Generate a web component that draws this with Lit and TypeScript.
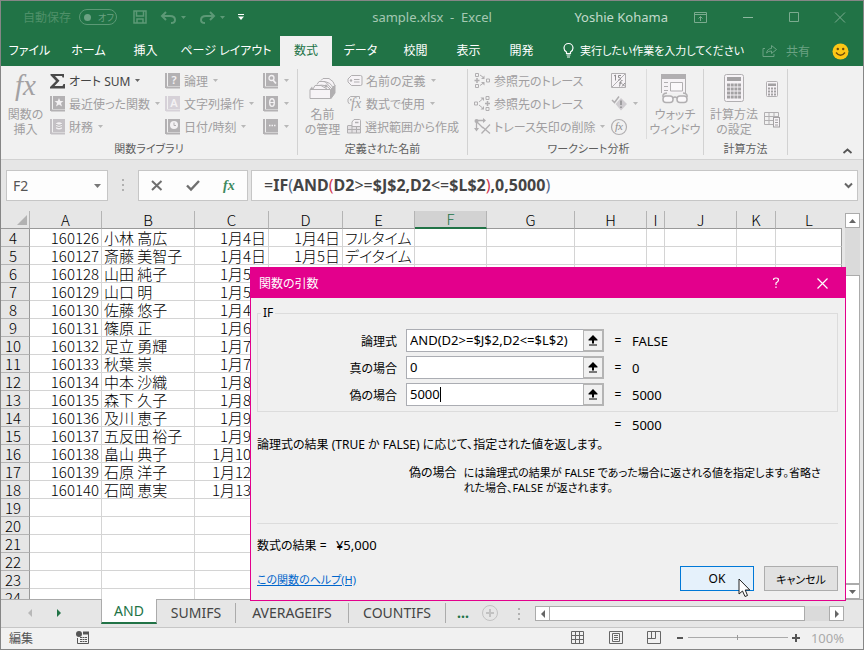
import { LitElement, html, css, svg, nothing, TemplateResult } from "lit";
import { customElement } from "lit/decorators.js";
import { classMap } from "lit/directives/class-map.js";

const icon = (w: number, h: number, body: TemplateResult) =>
  html`<svg width=${w} height=${h} viewBox="0 0 ${w} ${h}" aria-hidden="true">${body}</svg>`;

const book = (mark: TemplateResult, tone = "#b3b1b3") =>
  icon(16, 16, svg`<path d="M1 0V15M1 14.5H15" stroke=${tone} fill="none" stroke-width="2"/>
    <rect x="3" y="0" width="12" height="13" fill=${tone}/>${mark}`);

const letter = (t: string) =>
  svg`<text x="9" y="11" text-anchor="middle" font-family="Noto Sans" font-size="11" font-weight="600" fill="#f3f1f3">${t}</text>`;

const fxMark = (x: number, y: number, size: number, fill: string) =>
  svg`<text x=${x} y=${y} font-family="Liberation Serif" font-style="italic" font-size=${size} fill=${fill}>fx</text>`;

const G = "#b1afb1";

const icons = {
  save: icon(14, 14, svg`<path d="M1 1H13V13H1ZM3.500 1V6H10.500V1M4 13V9H10V13" fill="none" stroke="#5c9976" stroke-width="1.500"/>`),
  undo: icon(15, 13, svg`<path d="M5 1L1 5L5 9M1 5H9Q14 5 14 9Q14 12 10 12" fill="none" stroke="#5c9976" stroke-width="2"/>`),
  redo: icon(15, 13, svg`<path d="M10 1L14 5L10 9M14 5H6Q1 5 1 9Q1 12 5 12" fill="none" stroke="#5c9976" stroke-width="2"/>`),
  customize: icon(6, 6, svg`<path d="M0 .5H6" stroke="#fff"/><path d="M0 2.500H6L3 6Z" fill="#fff"/>`),
  ribbonOpt: icon(13, 11, svg`<path d="M.5 .5H12.500V10.500H.5ZM.5 2.500H12.500M6.500 9V4.500M4.500 6.500L6.500 4.500L8.500 6.500" fill="none" stroke="#7bab8f"/>`),
  min: icon(10, 11, svg`<path d="M0 5.500H10" stroke="#8db79f"/>`),
  max: icon(10, 11, svg`<path d="M.5 .5H9.500V9.500H.5Z" fill="none" stroke="#7bab8f"/>`),
  close: icon(10, 11, svg`<path d="M0 .5L10 10.500M10 .5L0 10.500" stroke="#7bab8f"/>`),
  bulb: icon(11, 15, svg`<path d="M3.500 10.500V9Q1 7.500 1 5A4.500 4.500 0 0 1 10 5Q10 7.500 7.500 9V10.500ZM3.500 12H7.500M4 14H7" fill="none" stroke="#fff" stroke-width="1.200"/>`),
  share: icon(16, 14, svg`<path d="M3 4.500H1V12.500H12V10M4.500 9Q5.500 4.500 9.500 4.500V1.500L14.500 5.500L9.500 9.500V7Q6.500 6.800 4.500 9Z" fill="none" stroke="#6ba283"/>`),
  smile: icon(17, 17, svg`<circle cx="8.500" cy="8.500" r="8" fill="#fdc716"/><circle cx="5.800" cy="6" r="1.200" fill="#6d4a0c"/><circle cx="11.200" cy="6" r="1.200" fill="#6d4a0c"/><path d="M4 9.500Q8.500 15 13 9.500" fill="none" stroke="#6d4a0c" stroke-width="1.300"/>`),
  bigFx: icon(24, 28, fxMark(1, 21, 29, "#a3a1a3")),
  sigma: icon(16, 16, svg`<path d="M.5 1H14V4.500H12.500L12 3H5L9.500 7.700L4.500 13H12.500L13.500 11H15V15.500H0V14L6 8L.5 2.300Z" fill="#4a4a4a"/>`),
  star: book(svg`<path d="M9 2L10.300 5H13.500L11 7L12 10.500L9 8.500L6 10.500L7 7L4.500 5H7.700Z" fill="#f3f1f3"/>`),
  coins: book(svg`<path d="M6 4.500Q9 2 12 4.500V9.500Q9 11.500 6 9.500Z" fill="#f3f1f3"/><path d="M6 5.500Q9 7 12 5.500M6 7.700Q9 9.200 12 7.700" stroke=${G} fill="none"/>`, "#c4c1c5"),
  quest: book(letter("?")),
  alpha: book(letter("A"), "#d6d1d8"),
  clock: book(svg`<circle cx="9" cy="6" r="4" fill="#f3f1f3"/><path d="M9 3.500V6.500H11" stroke=${G} fill="none"/>`),
  look: book(svg`<circle cx="8.500" cy="5" r="2.500" fill="none" stroke="#f3f1f3" stroke-width="1.300"/><path d="M10 7L13 10.500" stroke="#f3f1f3" stroke-width="1.800"/>`),
  theta: book(svg`<ellipse cx="9" cy="6.500" rx="2.300" ry="3.800" fill="none" stroke="#f3f1f3" stroke-width="1.400"/><path d="M7 6.500H11" stroke="#f3f1f3"/>`),
  dots: book(svg`<path d="M6 6.500H7.500M8.500 6.500H10M11 6.500H12.500" stroke="#f3f1f3" stroke-width="1.500"/>`),
  names: icon(28, 22, svg`<path d="M1 11.500H21.500V20.500H1Z" fill="#f6f3f6" stroke=${G}/><path d="M22 11L26 7V15L22 20.500Z" fill=${G} stroke=${G}/><path d="M4 11L6 7.500H12L18 11M8 6.500L10 3.500H16L22 10M12 2.500L14 .5H20Q25 3 26 8M14 3.500Q22 4 24 10M9 7.500Q17 6 21 11" fill="#f6f3f6" stroke=${G}/><circle cx="17" cy="8" r="1.500" fill=${G}/><path d="M1 11L3 8.500L4 11Z" fill=${G}/>`),
  tag: icon(16, 14, svg`<path d="M4.500 1.500H13.500Q15 1.500 15 3V10Q15 11.500 13.500 11.500H4.500L1 8V5Z" fill="#f6f3f6" stroke=${G}/><circle cx="4" cy="6.500" r="1.200" fill=${G}/><path d="M7 5.500H12.500M7 8H12.500" stroke=${G}/>`),
  tagFx: icon(16, 16, svg`<path d="M2.500 8L1 6V3L3.500 .5H12.500V3" fill="none" stroke=${G}/><circle cx="3.800" cy="3.800" r="1" fill=${G}/>${fxMark(4, 12, 14, "#a3a1a3")}`),
  selTag: icon(15, 15, svg`<path d="M1 6.500H13.500V14H.5V6.500M.5 10.500H13.500M5 6.500V14M9.500 6.500V14" fill="#e4e1e4" stroke=${G}/><path d="M7 .5H12.500Q13.500 .5 13.500 1.500V7.500H5V3Z" fill="#f6f3f6" stroke=${G}/><path d="M8 3.500H11.500" stroke=${G} stroke-width="1.500"/>`),
  prec: icon(17, 16, svg`<path d="M1.500 .5H4.500V3.500H1.500ZM1.500 11.500H4.500V14.500H1.500ZM12.500 6H15.500V9H12.500Z" fill="none" stroke=${G}/><path d="M3 5V10M.5 7.500H5.500" stroke=${G} stroke-width="1.500"/><path d="M6 2L9.500 4.500M6 12.500L9.500 10" stroke=${G}/><path d="M10.500 2.500V6H7Z M10.500 12.500V9H7Z" fill=${G}/>`),
  dep: icon(17, 16, svg`<path d="M.5 6H3.500V9H.5ZM12 .5H15V3.500H12ZM12 11.500H15V14.500H12Z" fill="none" stroke=${G}/><path d="M13.500 5V10M11 7.500H16" stroke=${G} stroke-width="1.500"/><path d="M5 6L8 3.500M5 9L8 11.500" stroke=${G}/><path d="M6.500 1.500H10V5Z M6.500 13.500H10V10Z" fill=${G}/>`),
  arrowsX: icon(17, 16, svg`<path d="M2.500 2V10M2.500 1.500H9M2 2L9 9" stroke=${G} stroke-width="1.300"/><path d="M0 9H5L2.500 12.500Z M9 -1V4L12 1.500Z" fill=${G}/><circle cx="2.500" cy="2" r="2" fill=${G}/><path d="M8.500 8L16 14.500M16 5.500L7.500 14.500" stroke=${G} stroke-width="1.300"/>`),
  show15: icon(16, 16, svg`<path d="M.5 .5H14.500V14.500H.5ZM1 14L14 1" fill="#f6f3f6" stroke=${G}/><path d="M3 3L4.500 2V7.500M10 2.500H7.500V4.500Q10 4.500 9.500 6Q9 7.500 7 7" fill="none" stroke="#8f8d8f"/><path d="M11.500 7.500Q10 7 9.500 9L8.500 13.500M8 10H11M11 10.500L14 13.500M14 10L11 13.500" fill="none" stroke="#8f8d8f"/>`),
  check: icon(17, 16, svg`<path d="M1 4L3.500 6.500L8 .5" fill="none" stroke=${G} stroke-width="1.500"/><path d="M10 2L16 8L10 14.500L4.500 8Z" fill="#cfccd0"/><path d="M10 4.500V9M10 10.500V12" stroke="#8f8d8f" stroke-width="1.500"/>`),
  evalFx: icon(16, 16, svg`<circle cx="8" cy="8" r="7.500" fill="none" stroke=${G} stroke-width="1.200"/>${fxMark(4, 11, 11, "#8f8d8f")}`),
  watch: icon(30, 30, svg`<path d="M1.500 5V24H25.500V5" fill="#f6f3f6" stroke=${G}/><path d="M1 0H26V5H1Z" fill=${G}/><path d="M4 8.500H8M4 12.500H8M4 16.500H8" stroke=${G}/><path d="M10.500 8.500H22.500V17H10.500Z" fill="#faf8fa" stroke=${G}/><path d="M1 19H29V29H1Z" fill="#f1f1f1"/><path d="M3 23V21Q4 19 7 19M27 23V21Q26 19 23 19M13 24Q15 22 17 24" fill="none" stroke=${G} stroke-width="1.500"/><rect x="3" y="22" width="10" height="6.500" rx="3" fill="#faf8fa" stroke=${G} stroke-width="1.500"/><rect x="17" y="22" width="10" height="6.500" rx="3" fill="#faf8fa" stroke=${G} stroke-width="1.500"/>`),
  calc: icon(20, 28, svg`<rect x=".5" y=".5" width="19" height="27" rx="2" fill="#f6f3f6" stroke=${G}/><path d="M3 3H17V7H3Z" fill="#a3a1a3"/><path d="M3 11H17M3 15H17M3 19H17M3 23H17" stroke="#a3a1a3" stroke-width="3" stroke-dasharray="3 .700"/>`),
  calcS: icon(12, 16, svg`<rect x=".5" y=".5" width="11" height="15" rx="1" fill="#f6f3f6" stroke=${G}/><path d="M2 2.500H10V5H2Z" fill="#a3a1a3"/><path d="M2 7.500H10M2 10.500H10M2 13.500H10" stroke="#a3a1a3" stroke-width="2" stroke-dasharray="2 1"/>`),
  calcSheet: icon(16, 16, svg`<path d="M.5 .5H14.500V6M.5 .5V12.500H9M.5 4.500H14.500M.5 8.500H9M5 .5V12.500M10 .5V6" fill="none" stroke=${G}/><rect x="9.500" y="5.500" width="6" height="9.500" fill="#f6f3f6" stroke="#a3a1a3"/><path d="M11 8H14M11 10.500H14M11 13H14" stroke="#a3a1a3"/>`),
  collapse: icon(9, 6, svg`<path d="M.5 5L4.500 1.500L8.500 5" fill="none" stroke="#555" stroke-width="1.800"/>`),
  cancel: icon(12, 11, svg`<path d="M1 1L10.500 10M10.500 1L1 10" stroke="#6f6f6f" stroke-width="2"/>`),
  enter: icon(14, 11, svg`<path d="M1 5.500L5 9.500L13 1" fill="none" stroke="#6f6f6f" stroke-width="2.400"/>`),
  greenFx: icon(14, 14, svg`<text x="1" y="11" font-family="Liberation Serif" font-style="italic" font-weight="700" font-size="14" fill="#3d8a5e">fx</text>`),
  chevron: icon(9, 7, svg`<path d="M1 1.500L4.500 5L8 1.500" fill="none" stroke="#666" stroke-width="2"/>`),
  pick: icon(10, 11, svg`<path d="M5 0L9.500 4.500V5.500H6V8.500H4V5.500H.5V4.500ZM1 9.500H9V10.500H1Z" fill="#000"/>`),
  qmark: icon(8, 12, svg`<path d="M1.500 3Q1.500 1 4 1Q6.500 1 6.500 3Q6.500 4.500 4 6V8M4 9.500V11" fill="none" stroke="#fff" stroke-width="1.200"/>`),
  dlgClose: icon(11, 11, svg`<path d="M.5 .5L10.500 10.500M10.500 .5L.5 10.500" stroke="#fff" stroke-width="1.200"/>`),
  plusRing: icon(16, 16, svg`<circle cx="8" cy="8" r="7.500" fill="none" stroke="#c2c2c2"/><path d="M8 4V12M4 8H12" stroke="#c2c2c2" stroke-width="2"/>`),
  macro: icon(14, 13, svg`<circle cx="3" cy="3" r="3" fill="#555"/><path d="M7 .5H13V3.500H7Z" fill="#555"/><path d="M1.500 7V12.500H12.500V3" fill="none" stroke="#555"/><path d="M4 6.500H11M4 8.500H11M4 10.500H11" stroke="#555" stroke-dasharray="2 .500"/>`),
  vNormal: icon(14, 14, svg`<path d="M.5 .5H12.500V12.500H.5ZM.5 4.500H12.500M.5 8.500H12.500M4.500 .5V12.500M8.500 .5V12.500" fill="none" stroke="#666"/>`),
  vLayout: icon(14, 14, svg`<path d="M.5 .5H13.500V12.500H.5ZM3.500 2.500H10.500V10.500H3.500ZM5 4.500H9M5 6.500H9M5 8.500H9" fill="none" stroke="#666"/>`),
  vBreak: icon(14, 14, svg`<path d="M.5 .5H13.500V12.500H.5ZM4.500 .5V7.500M.5 7.500H8.500V.5" fill="none" stroke="#666"/>`),
  pointer: icon(13, 20, svg`<path d="M1 1V16L4.500 13L7 18.500L9.500 17.500L7.200 12H11.800Z" fill="#fff" stroke="#222"/>`),
  corner: icon(10, 10, svg`<path d="M10 0V10H0Z" fill="#b2b2b2"/>`),
};

const tri = (dir: "up" | "down" | "left" | "right", fill: string) => {
  const d = { up: "M0 4L3.500 0L7 4Z", down: "M0 0H7L3.500 4Z", left: "M4 0V8L0 4Z", right: "M0 0V8L4 4Z" }[dir];
  return dir === "up" || dir === "down" ? icon(7, 4, svg`<path d=${d} fill=${fill}/>`) : icon(4, 8, svg`<path d=${d} fill=${fill}/>`);
};

const smallDrop = (fill = "#b8b8b8") => icon(5, 3, svg`<path d="M0 0H5L2.500 3Z" fill=${fill}/>`);

const people: [number, string, string, string?, string?][] = [
  [160126, "小林 高広", "1月4日", "1月4日", "フルタイム"],
  [160127, "斎藤 美智子", "1月4日", "1月5日", "デイタイム"],
  [160128, "山田 純子", "1月5日"],
  [160129, "山口 明", "1月5日"],
  [160130, "佐藤 悠子", "1月4日"],
  [160131, "篠原 正", "1月6日"],
  [160132, "足立 勇輝", "1月7日"],
  [160133, "秋葉 崇", "1月7日"],
  [160134, "中本 沙織", "1月8日"],
  [160135, "森下 久子", "1月8日"],
  [160136, "及川 恵子", "1月9日"],
  [160137, "五反田 裕子", "1月9日"],
  [160138, "畠山 典子", "1月10日"],
  [160139, "石原 洋子", "1月12日"],
  [160140, "石岡 恵実", "1月13日"],
];

const baseText = css`
  :host, * { box-sizing: border-box; }
  svg { display: block; flex: none; overflow: visible; }
  button, input {
    font: inherit; color: inherit; margin: 0; padding: 0;
    border: 0; background: none; font-feature-settings: inherit;
  }
  button { display: flex; align-items: center; white-space: nowrap; }
`;

@customElement("title-bar")
class TitleBar extends LitElement {
  static styles = [baseText, css`
    :host { display: block; background: #217346; color: #fff; }
    .top { display: flex; align-items: center; height: 35px; padding: 0 18px 3px 22px; position: relative; }
    .auto { display: flex; align-items: center; gap: 8px; color: #4f9069; white-space: nowrap; }
    .pill { display: flex; align-items: center; gap: 7px; width: 38px; height: 16px; padding: 0 4px; border: 1px solid #5c9976; border-radius: 8px; font-size: 9px; color: #6ba283; }
    .pill input { appearance: none; flex: none; width: 7px; height: 7px; border-radius: 50%; background: #6ba283; }
    .quick { display: flex; align-items: center; gap: 5px; margin-left: 16px; }
    .quick .wide { margin-left: 9px; }
    .quick .last { margin-left: 8px; }
    .doc { position: absolute; left: 0; right: 0; text-align: center; color: #a5c8b3; pointer-events: none; white-space: pre; font-size: 13px; }
    .right { display: flex; align-items: center; margin-left: auto; color: #c2dacb; font-size: 13px; }
    .right button { margin-left: 36px; }
    .right .first { margin-left: 26px; }
    nav { display: flex; height: 30px; align-items: stretch; font-size: 12px; padding-right: 14px; }
    .spread { display: grid; grid-template-columns: 57px 61px 53px 108px 52px 57px 53px 53px 53px; }
    .tab { justify-content: center; padding-bottom: 2px; }
    .on { background: #f1f1f1; color: #217346; }
    .tell { gap: 6px; margin-left: 15px; padding-bottom: 2px; font-size: 11px; }
    .share { gap: 8px; color: #6ba283; margin-left: auto; }
    .smile { margin-left: 22px; }
  `];
  render() {
    const tabs = ["ファイル", "ホーム", "挿入", "ページ レイアウト", "数式", "データ", "校閲", "表示", "開発"];
    return html`
      <div class="top">
        <label class="auto">自動保存<span class="pill"><input type="checkbox" role="switch">オフ</span></label>
        <div class="quick">
          <button aria-label="上書き保存">${icons.save}</button>
          <button class="wide" aria-label="元に戻す">${icons.undo}</button>${smallDrop("#5c9976")}
          <button class="wide" aria-label="やり直し">${icons.redo}</button>${smallDrop("#5c9976")}
          <button class="last" aria-label="カスタマイズ">${icons.customize}</button>
        </div>
        <div class="doc">sample.xlsx  -  Excel</div>
        <div class="right">Yoshie Kohama
          <button class="first" aria-label="リボンの表示オプション">${icons.ribbonOpt}</button>
          <button aria-label="最小化">${icons.min}</button>
          <button aria-label="最大化">${icons.max}</button>
          <button aria-label="閉じる">${icons.close}</button>
        </div>
      </div>
      <nav>
        <div class="spread">${tabs.map((t) => html`<button class=${classMap({ tab: true, on: t === "数式" })}>${t}</button>`)}</div>
        <button class="tell">${icons.bulb}実行したい作業を入力してください</button>
        <button class="share">${icons.share}共有</button>
        <button class="smile" aria-label="フィードバック">${icons.smile}</button>
      </nav>`;
  }
}

@customElement("ribbon-panel")
class RibbonPanel extends LitElement {
  static styles = [baseText, css`
    :host { display: flex; background: #f1f1f1; height: 94px; padding-top: 3px; border-bottom: 1px solid #d2d2d2; color: #a09ea0; position: relative; }
    section { display: flex; flex-direction: column; border-right: 1px solid #d2d2d2; height: 86px; flex: none; }
    .body { display: flex; height: 70px; flex: none; }
    h2 { margin: 0; font-size: 11px; font-weight: 400; line-height: 20px; color: #5e5e5e; text-align: center; }
    .col { display: flex; flex-direction: column; }
    .col button { height: 23px; gap: 3px; }
    .col .drop { margin-left: 2px; }
    .live { color: #444; }
    .big { flex-direction: column; text-align: center; padding: 5px 0 2px; }
    .label { margin-top: auto; line-height: 15px; }
    .low { margin-top: 4px; }
    .lib { width: 297px; }
    .lib .big { width: 49px; }
    .lib .c2 { width: 115px; }
    .lib .c3 { width: 98px; }
    .def { width: 170px; }
    .def .big { width: 49px; }
    .audit { width: 236px; padding-left: 6px; }
    .audit .a1 { width: 137px; }
    .audit .a2 { width: 36px; border-right: 1px solid #dcdcdc; }
    .audit .big { width: 56px; }
    .mode { width: 84px; }
    .mode .big { width: 60px; }
    .mode .col { justify-content: center; align-items: center; gap: 8px; }
    .fold { position: absolute; right: 11px; bottom: 5px; }
  `];
  item(ic: TemplateResult, text = "", drop = true, live = false) {
    return html`<button class=${classMap({ live })} aria-label=${text || "関数"}>${ic}${text}${drop ? html`<span class="drop">${smallDrop(live ? "#666" : "#b8b8b8")}</span>` : nothing}</button>`;
  }
  render() {
    const i = icons;
    return html`
      <section class="lib">
        <div class="body">
          <button class="big">${i.bigFx}<span class="label">関数の<br>挿入</span></button>
          <div class="col c2">${this.item(i.sigma, "オート SUM ", true, true)}${this.item(i.star, "最近使った関数")}${this.item(i.coins, "財務")}</div>
          <div class="col c3">${this.item(i.quest, "論理")}${this.item(i.alpha, "文字列操作")}${this.item(i.clock, "日付/時刻")}</div>
          <div class="col">${this.item(i.look)}${this.item(i.theta)}${this.item(i.dots)}</div>
        </div>
        <h2>関数ライブラリ</h2>
      </section>
      <section class="def">
        <div class="body">
          <button class="big"><span class="low">${i.names}</span><span class="label">名前<br>の管理</span></button>
          <div class="col">${this.item(i.tag, "名前の定義 ")}${this.item(i.tagFx, "数式で使用")}${this.item(i.selTag, "選択範囲から作成", false)}</div>
        </div>
        <h2>定義された名前</h2>
      </section>
      <section class="audit">
        <div class="body">
          <div class="col a1">${this.item(i.prec, "参照元のトレース", false)}${this.item(i.dep, "参照先のトレース", false)}${this.item(i.arrowsX, "トレース矢印の削除")}</div>
          <div class="col a2">${this.item(i.show15, "", false)}${this.item(i.check)}${this.item(i.evalFx, "", false)}</div>
          <button class="big">${i.watch}<span class="label">ウォッチ<br>ウィンドウ</span></button>
        </div>
        <h2>ワークシート分析</h2>
      </section>
      <section class="mode">
        <div class="body">
          <button class="big">${i.calc}<span class="label">計算方法<br>の設定</span></button>
          <div class="col"><button aria-label="再計算実行">${i.calcS}</button><button aria-label="シート再計算">${i.calcSheet}</button></div>
        </div>
        <h2>計算方法</h2>
      </section>
      <button class="fold" aria-label="リボンを折りたたむ">${icons.collapse}</button>`;
  }
}

@customElement("formula-bar")
class FormulaBar extends LitElement {
  static styles = [baseText, css`
    :host { display: flex; background: #e6e6e6; height: 51px; padding: 10px 5px 0; }
    .box { display: flex; align-items: center; height: 31px; background: #fdfdfd; border: 1px solid #c6c6c6; }
    .name { width: 102px; padding: 0 6px; color: #555; font-size: 14px; }
    .name input { flex: 1; min-width: 0; }
    .grip { display: flex; flex-direction: column; justify-content: center; gap: 3px; height: 30px; margin: 0 14px; }
    .grip i { width: 2px; height: 2px; background: #b0b0b0; }
    .acts { width: 110px; justify-content: space-between; padding: 0 11px 0 12px; }
    .fx { flex: 1; margin-left: 3px; padding: 0 4px 0 12px; color: #444; font-size: 16px; font-weight: 700; min-width: 0; }
    .edit { flex: 1; outline: 0; white-space: nowrap; line-height: 28px; padding-bottom: 1px; }
    .t { font-weight: 400; }
    .r { font-weight: 400; color: #d13a52; }
    .b { font-weight: 400; color: #51698c; }
  `];
  render() {
    return html`
      <div class="box name"><input aria-label="名前ボックス" value="F2"><button aria-label="名前の一覧">${tri("down", "#777")}</button></div>
      <div class="grip"><i></i><i></i><i></i></div>
      <div class="box acts"><button aria-label="キャンセル">${icons.cancel}</button><button aria-label="入力">${icons.enter}</button><button aria-label="関数の挿入">${icons.greenFx}</button></div>
      <div class="box fx"><div class="edit" role="textbox" contenteditable="true" aria-label="数式バー"><span class="t">=</span>IF<span class="b">(</span>AND<span class="r">(</span>D2<span class="t">&gt;=</span>$J$2,D2<span class="t">&lt;=</span>$L$2<span class="r">)</span>,0,5000<span class="b">)</span></div><button aria-label="数式バーの展開">${icons.chevron}</button></div>`;
  }
}

@customElement("sheet-grid")
class SheetGrid extends LitElement {
  static styles = [baseText, css`
    :host { display: flex; flex: 1; min-height: 0; background: #e6e6e6; overflow: hidden; font-family: "Noto Sans CJK JP", sans-serif; color: #000; }
    .pane { flex: 1; min-width: 0; overflow: hidden; }
    table { table-layout: fixed; width: 100%; border-collapse: separate; border-spacing: 0; font-size: 15px; }
    .rh { width: 29px; } .w72 { width: 72px; } .w93 { width: 93px; } .w74 { width: 74px; } .w88 { width: 88px; } .w18 { width: 18px; } .w39 { width: 39px; }
    th, td { height: 18px; padding: 0 2px; line-height: 17px; font-weight: 300; white-space: nowrap; }
    td { background: #fff; border-right: 1px solid #d4d4d4; border-bottom: 1px solid #d4d4d4; }
    td:last-child { border-right-color: #999; }
    th { border-right: 1px solid #b4b4b4; border-bottom: 1px solid #999; background: #e6e6e6; }
    tbody th { border-bottom-color: #b4b4b4; border-right-color: #999; padding: 0 4px 0 0; }
    thead th:last-child { border-right: 0; }
    thead .sel { background: #d2d2d2; color: #217346; border-bottom: 2px solid #217346; line-height: 16px; }
    .num { text-align: right; }
    .corner svg { margin-left: 14px; }
    .bar { display: flex; flex-direction: column; width: 15px; margin: 2px 3px 0; background: #dadada; }
    .bar button { height: 15px; justify-content: center; background: #fff; border: 1px solid #ababab; flex: none; }
    .thumb { flex: 1; margin-top: 47px; background: #fff; border: 1px solid #ababab; }
  `];
  render() {
    const cols = "ABCDEFGHIJKL".split("");
    const widths = ["w72", "w93", "w74", "w74", "w72", "w72", "w88", "w72", "w18", "w72", "w39", ""];
    const rows = Array.from({ length: 21 }, (_, n) => n);
    return html`
      <div class="pane"><table>
        <colgroup><col class="rh">${widths.map((w) => html`<col class=${w}>`)}</colgroup>
        <thead><tr><th class="corner">${icons.corner}</th>${cols.map((c) => html`<th class=${c === "F" ? "sel" : ""}>${c}</th>`)}</tr></thead>
        <tbody>${rows.map((n) => html`<tr><th>${n + 4}</th>${cols.map((_, c) => html`<td class=${[0, 2, 3].includes(c) ? "num" : ""}>${people[n]?.[c] ?? ""}</td>`)}</tr>`)}</tbody>
      </table></div>
      <div class="bar"><button aria-label="上へ">${tri("up", "#666")}</button><div class="thumb"></div><button aria-label="下へ">${tri("down", "#666")}</button></div>`;
  }
}

@customElement("sheet-footer")
class SheetFooter extends LitElement {
  static styles = [baseText, css`
    :host { display: block; }
    .tabs { display: flex; align-items: flex-start; height: 29px; background: #e6e6e6; border-top: 1px solid #ababab; border-bottom: 1px solid #c6c6c6; padding-right: 19px; font-size: 14px; color: #444; }
    .nav { display: flex; align-items: center; gap: 25px; width: 100px; padding-left: 27px; height: 26px; flex: none; }
    .tab { height: 25px; justify-content: center; flex: none; }
    .on { width: 56px; margin-top: -1px; background: #fff; color: #217346; border-left: 1px solid #ababab; border-right: 1px solid #ababab; border-bottom: 2px solid #217346; }
    .s { width: 78px; } .a { width: 112px; } .c { width: 96px; }
    .sep { width: 1px; height: 20px; background: #ababab; margin-top: 3px; flex: none; }
    .more { color: #217346; font-weight: 700; width: 34px; height: 25px; justify-content: center; }
    .add { height: 26px; margin-left: 2px; }
    .grip { display: flex; flex-direction: column; gap: 3px; margin: 8px 15px 0 20px; }
    .grip i { width: 2px; height: 2px; background: #b0b0b0; }
    .scroll { display: flex; flex: 1; margin-top: 6px; height: 15px; background: #dadada; min-width: 0; }
    .scroll button { width: 15px; justify-content: center; background: #fff; border: 1px solid #ababab; }
    .thumb { flex: 1; background: #fff; border: 1px solid #ababab; border-left: 0; margin-right: 24px; }
    .status { display: flex; align-items: center; height: 21px; background: #f1f1f1; padding: 0 19px 2px 8px; font-size: 12px; color: #555; }
    .macro { margin-left: 43px; }
    .views { display: flex; gap: 24px; margin-left: auto; }
    .zoom { display: flex; align-items: center; gap: 4px; margin: 0 11px 0 15px; color: #555; }
    input[type="range"] { appearance: none; width: 100px; height: 5px; background: linear-gradient(#aaa, #aaa) center / 100% 1px no-repeat; }
    input[type="range"]::-webkit-slider-thumb { appearance: none; width: 1px; height: 5px; background: #999; }
    .pct { color: #aaa; font-size: 13px; }
  `];
  render() {
    return html`
      <div class="tabs">
        <div class="nav"><button aria-label="前のシート">${tri("left", "#b8b8b8")}</button><button aria-label="次のシート">${tri("right", "#217346")}</button></div>
        <button class="tab on">AND</button><button class="tab s">SUMIFS</button><span class="sep"></span>
        <button class="tab a">AVERAGEIFS</button><span class="sep"></span><button class="tab c">COUNTIFS</button><span class="sep"></span>
        <button class="more">...</button><button class="add" aria-label="新しいシート">${icons.plusRing}</button>
        <div class="grip"><i></i><i></i><i></i></div>
        <div class="scroll"><button aria-label="左へ">${tri("left", "#666")}</button><div class="thumb"></div><button aria-label="右へ">${tri("right", "#666")}</button></div>
      </div>
      <div class="status">編集<button class="macro" aria-label="マクロの記録">${icons.macro}</button>
        <div class="views"><button aria-label="標準">${icons.vNormal}</button><button aria-label="ページ レイアウト">${icons.vLayout}</button><button aria-label="改ページ プレビュー">${icons.vBreak}</button></div>
        <div class="zoom"><button aria-label="縮小">${icon(8, 8, svg`<path d="M1 4H7" stroke="#555" stroke-width="2"/>`)}</button><input type="range" min="0" max="100" value="50" aria-label="ズーム"><button aria-label="拡大">${icon(8, 8, svg`<path d="M0 4H8M4 0V8" stroke="#555" stroke-width="2"/>`)}</button></div>
        <span class="pct">100%</span>
      </div>`;
  }
}

@customElement("function-dialog")
class FunctionDialog extends LitElement {
  static styles = [baseText, css`
    :host { display: flex; flex-direction: column; background: #f0f0f0; border: 1px solid #e3008c; color: #000; font-size: 12px; }
    header { display: flex; align-items: center; height: 30px; background: #e3008c; color: #fff; padding: 0 17px 0 8px; }
    header button:first-of-type { margin-left: auto; margin-right: 37px; }
    .main { flex: 1; display: flex; flex-direction: column; padding: 7px 7px 9px 6px; }
    fieldset { margin: 0; padding: 8px 0 6px; border: 1px solid #dcdcdc; height: 107px; }
    legend { margin-left: 3px; padding: 0 2px; line-height: 16px; }
    .row { display: flex; align-items: center; height: 23px; margin-bottom: 4px; }
    .row label { width: 139px; text-align: right; margin-right: 9px; }
    .ref { position: relative; display: flex; width: 198px; height: 23px; background: #fff; border: 1px solid #abadb3; font-size: 13px; }
    .ref input { flex: 1; min-width: 0; padding: 0 0 2px 3px; outline: 0; }
    .ref button { width: 21px; justify-content: center; background: #f0f0f0; border: 2px solid #b4b4b4; border-left-width: 1px; margin: -1px; }
    .caret { position: absolute; left: calc(3px + 4ch); top: 3px; width: 1px; height: 15px; background: #000; }
    .eq { width: 28px; text-align: center; }
    .val { font-size: 13px; }
    .total { display: flex; margin: 4px 0 1px 347px; line-height: 18px; }
    p { margin: 0; }
    .about { line-height: 20px; }
    .arg { display: flex; gap: 7px; line-height: 15px; margin: 10px 10px 0 152px; }
    .arg dt { flex: none; }
    .arg dd { margin: 0; font-size: 11px; }
    .result { border-top: 1px solid #dcdcdc; margin-top: 28px; padding-top: 11px; line-height: 20px; white-space: pre; }
    footer { display: flex; align-items: center; gap: 10px; margin-top: auto; }
    footer a { color: #0066cc; margin-right: auto; font-size: 11px; }
    footer button { width: 74px; height: 25px; justify-content: center; border: 1px solid #adadad; background: #e1e1e1; }
    footer .ok { border-color: #0078d7; background: #e5f1fb; position: relative; }
    .cancel { font-size: 11px; }
    .pointer { position: absolute; left: 57px; top: 11px; }
  `];
  render() {
    const rows: [string, string, string][] = [["論理式", "AND(D2>=$J$2,D2<=$L$2)", "FALSE"], ["真の場合", "0", "0"], ["偽の場合", "5000", "5000"]];
    return html`
      <header>関数の引数<button aria-label="ヘルプ">${icons.qmark}</button><button aria-label="閉じる">${icons.dlgClose}</button></header>
      <div class="main">
        <fieldset><legend>IF</legend>
          ${rows.map(([l, v, r], n) => html`<div class="row"><label for="arg${n}">${l}</label><div class="ref"><input id="arg${n}" value=${v}>${n === 2 ? html`<span class="caret"></span>` : nothing}<button aria-label="範囲を選択">${icons.pick}</button></div><span class="eq">=</span><span class="val">${r}</span></div>`)}
        </fieldset>
        <div class="total"><span class="eq">=</span><span class="val">5000</span></div>
        <p class="about">論理式の結果 (TRUE か FALSE) に応じて、指定された値を返します。</p>
        <dl class="arg"><dt>偽の場合</dt><dd>には論理式の結果が FALSE であった場合に返される値を指定します。省略された場合、FALSE が返されます。</dd></dl>
        <div class="result">数式の結果 =   <span class="val">¥5,000</span></div>
        <footer><a href="#help">この関数のヘルプ(H)</a><button class="ok">OK<span class="pointer">${icons.pointer}</span></button><button class="cancel">キャンセル</button></footer>
      </div>`;
  }
}

@customElement("app-root")
class AppRoot extends LitElement {
  static styles = css`
    :host { display: flex; flex-direction: column; box-sizing: border-box; height: 100vh; border: 1px solid #868686; position: relative; background: #e6e6e6; font-family: "Noto Sans", "Noto Sans CJK JP", sans-serif; font-feature-settings: "palt"; font-size: 12px; }
    title-bar, ribbon-panel, formula-bar, sheet-footer { flex: none; }
    .dialog { position: absolute; left: 249px; right: 17px; top: 266px; height: 334px; }
  `;
  render() {
    return html`
      <title-bar></title-bar>
      <ribbon-panel></ribbon-panel>
      <formula-bar></formula-bar>
      <sheet-grid></sheet-grid>
      <sheet-footer></sheet-footer>
      <function-dialog class="dialog" role="dialog" aria-label="関数の引数"></function-dialog>`;
  }
}
